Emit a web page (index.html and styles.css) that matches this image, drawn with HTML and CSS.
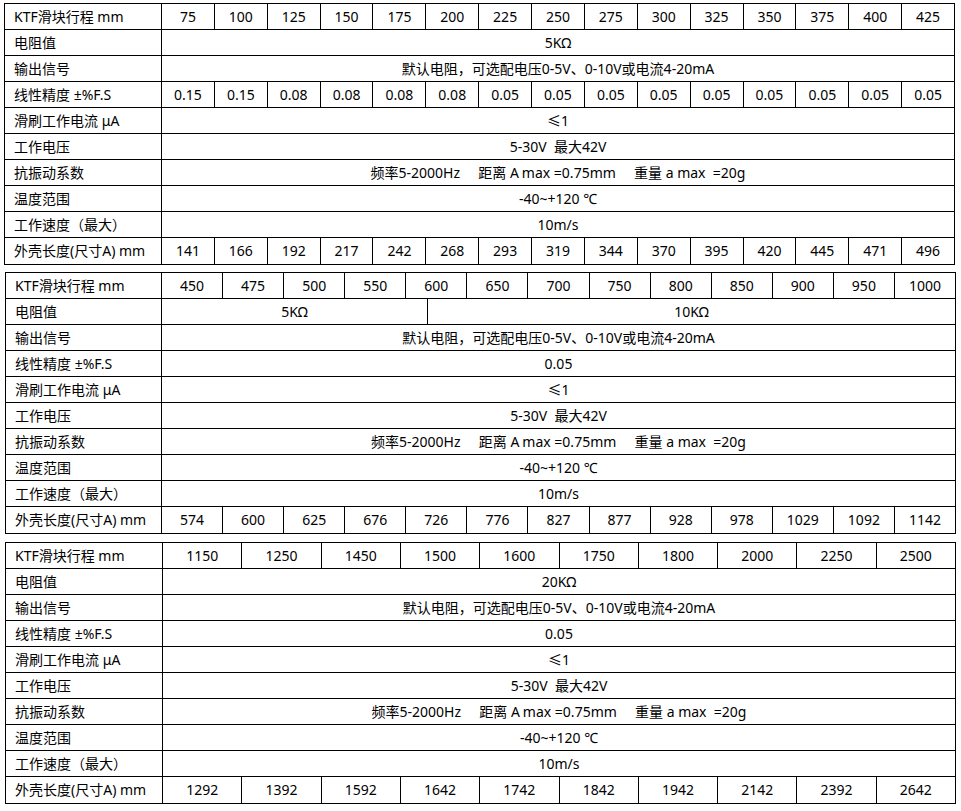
FILE: index.html
```html
<!DOCTYPE html>
<html lang="zh-CN">
<head>
<meta charset="utf-8">
<title>KTF</title>
<link rel="stylesheet" href="styles.css">
</head>
<body>
<div class="page">
  <div class="spec t1">
    <div class="lab">KTF滑块行程 mm</div>
    <div class="v">75</div><div class="v">100</div><div class="v">125</div><div class="v">150</div><div class="v">175</div><div class="v">200</div><div class="v">225</div><div class="v">250</div><div class="v">275</div><div class="v">300</div><div class="v">325</div><div class="v">350</div><div class="v">375</div><div class="v">400</div><div class="v">425</div>
    <div class="lab">电阻值</div><div class="v span">5KΩ</div>
    <div class="lab">输出信号</div><div class="v span">默认电阻，可选配电压0-5V、0-10V或电流4-20mA</div>
    <div class="lab">线性精度 ±%F.S</div>
    <div class="v">0.15</div><div class="v">0.15</div><div class="v">0.08</div><div class="v">0.08</div><div class="v">0.08</div><div class="v">0.08</div><div class="v">0.05</div><div class="v">0.05</div><div class="v">0.05</div><div class="v">0.05</div><div class="v">0.05</div><div class="v">0.05</div><div class="v">0.05</div><div class="v">0.05</div><div class="v">0.05</div>
    <div class="lab">滑刷工作电流 μA</div><div class="v span">≤1</div>
    <div class="lab">工作电压</div><div class="v span">5-30V&nbsp; 最大42V</div>
    <div class="lab">抗振动系数</div><div class="v span">频率5-2000Hz&nbsp;&nbsp;&nbsp;&nbsp; 距离 A<span class="thin">max</span> =0.75mm&nbsp;&nbsp;&nbsp;&nbsp; 重量 a max&nbsp; =20g</div>
    <div class="lab">温度范围</div><div class="v span">-40~+120 ℃</div>
    <div class="lab">工作速度（最大）</div><div class="v span">10m/s</div>
    <div class="lab last">外壳长度(尺寸A) mm</div>
    <div class="v last">141</div><div class="v last">166</div><div class="v last">192</div><div class="v last">217</div><div class="v last">242</div><div class="v last">268</div><div class="v last">293</div><div class="v last">319</div><div class="v last">344</div><div class="v last">370</div><div class="v last">395</div><div class="v last">420</div><div class="v last">445</div><div class="v last">471</div><div class="v last">496</div>
  </div>

  <div class="spec t2">
    <div class="lab">KTF滑块行程 mm</div>
    <div class="v">450</div><div class="v">475</div><div class="v">500</div><div class="v">550</div><div class="v">600</div><div class="v">650</div><div class="v">700</div><div class="v">750</div><div class="v">800</div><div class="v">850</div><div class="v">900</div><div class="v">950</div><div class="v">1000</div>
    <div class="lab">电阻值</div>
    <div class="split span"><div class="v part1">5KΩ</div><div class="v part2">10KΩ</div></div>
    <div class="lab">输出信号</div><div class="v span">默认电阻，可选配电压0-5V、0-10V或电流4-20mA</div>
    <div class="lab">线性精度 ±%F.S</div><div class="v span">0.05</div>
    <div class="lab">滑刷工作电流 μA</div><div class="v span">≤1</div>
    <div class="lab">工作电压</div><div class="v span">5-30V&nbsp; 最大42V</div>
    <div class="lab">抗振动系数</div><div class="v span">频率5-2000Hz&nbsp;&nbsp;&nbsp;&nbsp; 距离 A<span class="thin">max</span> =0.75mm&nbsp;&nbsp;&nbsp;&nbsp; 重量 a max&nbsp; =20g</div>
    <div class="lab">温度范围</div><div class="v span">-40~+120 ℃</div>
    <div class="lab">工作速度（最大）</div><div class="v span">10m/s</div>
    <div class="lab last">外壳长度(尺寸A) mm</div>
    <div class="v last">574</div><div class="v last">600</div><div class="v last">625</div><div class="v last">676</div><div class="v last">726</div><div class="v last">776</div><div class="v last">827</div><div class="v last">877</div><div class="v last">928</div><div class="v last">978</div><div class="v last">1029</div><div class="v last">1092</div><div class="v last">1142</div>
  </div>

  <div class="spec t3">
    <div class="lab">KTF滑块行程 mm</div>
    <div class="v">1150</div><div class="v">1250</div><div class="v">1450</div><div class="v">1500</div><div class="v">1600</div><div class="v">1750</div><div class="v">1800</div><div class="v">2000</div><div class="v">2250</div><div class="v">2500</div>
    <div class="lab">电阻值</div><div class="v span">20KΩ</div>
    <div class="lab">输出信号</div><div class="v span">默认电阻，可选配电压0-5V、0-10V或电流4-20mA</div>
    <div class="lab">线性精度 ±%F.S</div><div class="v span">0.05</div>
    <div class="lab">滑刷工作电流 μA</div><div class="v span">≤1</div>
    <div class="lab">工作电压</div><div class="v span">5-30V&nbsp; 最大42V</div>
    <div class="lab">抗振动系数</div><div class="v span">频率5-2000Hz&nbsp;&nbsp;&nbsp;&nbsp; 距离 A<span class="thin">max</span> =0.75mm&nbsp;&nbsp;&nbsp;&nbsp; 重量 a max&nbsp; =20g</div>
    <div class="lab">温度范围</div><div class="v span">-40~+120 ℃</div>
    <div class="lab">工作速度（最大）</div><div class="v span">10m/s</div>
    <div class="lab last">外壳长度(尺寸A) mm</div>
    <div class="v last">1292</div><div class="v last">1392</div><div class="v last">1592</div><div class="v last">1642</div><div class="v last">1742</div><div class="v last">1842</div><div class="v last">1942</div><div class="v last">2142</div><div class="v last">2392</div><div class="v last">2642</div>
  </div>
</div>
</body>
</html>
```
FILE: styles.css
```css
html, body {
  margin: 0;
  padding: 0;
  background: #fff;
}
.page {
  padding-top: 3px;
  font-family: "Noto Sans", "Noto Sans CJK SC", sans-serif;
  font-size: 14px;
  color: #000;
}
.spec {
  display: grid;
  border-top: 1px solid #000;
  border-left: 1px solid #000;
}
.spec > div,
.split > div {
  border-right: 1px solid #000;
  border-bottom: 1px solid #000;
  height: 25px;
  line-height: 26px;
  white-space: nowrap;
  overflow: hidden;
}
.spec > .last {
  height: 26px;
}
.split {
  display: flex;
  border: none !important;
  height: 26px !important;
}
.t1 {
  width: 950px;
  margin-left: 4px;
  grid-template-columns: 157px repeat(15, 1fr);
}
.t2 {
  width: 950px;
  margin-left: 5px;
  margin-top: 7px;
  grid-template-columns: 156px repeat(13, 1fr);
}
.t3 {
  width: 950px;
  margin-left: 5px;
  margin-top: 8px;
  grid-template-columns: 157px repeat(10, 1fr);
}
.lab {
  padding-left: 9px;
}
.v {
  text-align: center;
}
.span {
  grid-column: 2 / -1;
}
.part1 {
  width: 265px;
  flex: none;
}
.part2 {
  flex: 1;
}
.thin {
  margin-left: 3px;
}
```
